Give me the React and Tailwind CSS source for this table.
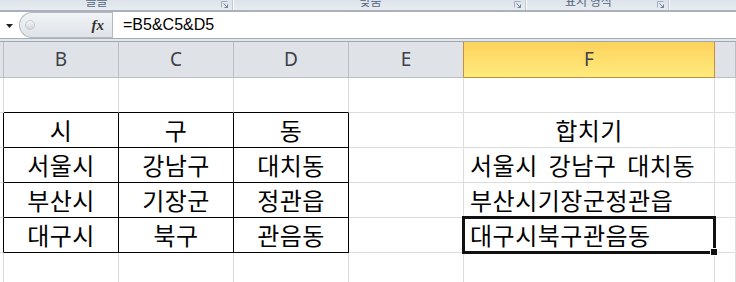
import React from 'react';

const KR = "font-['Noto_Sans_CJK_KR',sans-serif]";

function Launcher() {
  return (
    <svg width="8" height="8" viewBox="0 0 8 8" className="block">
      <path d="M0.5 6.5V0.5H6.5" fill="none" stroke="#a3afc0" />
      <path d="M2.5 2.5L6.5 6.5M3.5 6.5H6.5V3.5" fill="none" stroke="#6f819b" />
    </svg>
  );
}

function RibbonGroup({ label, className }) {
  return (
    <div className={`flex h-full shrink-0 border-r border-[#c3cad4] shadow-[1px_0_0_#f8fafc] ${className}`}>
      <div className={`flex-1 -mt-[5px] whitespace-nowrap text-center text-[12px] leading-[12px] text-[#55677f] ${KR}`}>
        {label}
      </div>
      <div className="flex w-[17px] justify-end pr-[3px] pt-[1px]">
        <Launcher />
      </div>
    </div>
  );
}

const widths = ['w-[4px]', 'w-[115px]', 'w-[115px]', 'w-[115px]', 'w-[115px]', 'w-[251px]', 'flex-1'];
const letters = ['', 'B', 'C', 'D', 'E', 'F', ''];

const rows = [
  ['', '', '', '', '', '', ''],
  ['', '시', '구', '동', '', '합치기', ''],
  ['', '서울시', '강남구', '대치동', '', '서울시 강남구 대치동', ''],
  ['', '부산시', '기장군', '정관읍', '', '부산시기장군정관읍', ''],
  ['', '대구시', '북구', '관음동', '', '대구시북구관음동', ''],
  ['', '', '', '', '', '', ''],
];

function cellClass(r, c) {
  const inTable = r >= 1 && r <= 4;
  let right = 'border-r-[#dadcdd]';
  let bottom = 'border-b-[#dadcdd]';
  if (inTable && c <= 3) right = 'border-r-black';
  if ((r === 0 || inTable) && c >= 1 && c <= 3) bottom = 'border-b-black';
  let align = 'justify-center';
  if (c === 5 && r !== 1) align = 'justify-start pl-[6px]';
  return `${widths[c]} ${right} ${bottom} ${align}`;
}

export default function App() {
  return (
    <div className="relative h-[282px] w-[736px] overflow-hidden bg-white">
      {/* ribbon group labels, scrolled mostly out of view */}
      <div className="flex h-[12px] overflow-hidden border-b-2 border-[#aab1ba] bg-gradient-to-b from-[#dde3ea] to-[#e8ecf1]">
        <RibbonGroup label="글꼴" className="-ml-[22px] w-[255px]" />
        <RibbonGroup label="맞춤" className="w-[293px]" />
        <RibbonGroup label="표시 형식" className="w-[143px]" />
      </div>

      {/* formula bar */}
      <div className="flex h-[27px] border-b border-[#a6adb6] bg-white">
        <div className="flex w-[19px] shrink-0 items-center justify-center pt-[2px]">
          <svg width="7" height="4" viewBox="0 0 7 4">
            <path d="M0 0H7L3.5 4Z" fill="#222" />
          </svg>
        </div>
        <div className="flex w-[93px] shrink-0 items-center rounded-l-full border border-r-0 border-[#b4bac3] bg-gradient-to-b from-[#f1f3f5] to-[#dfe3e8]">
          <div className="ml-[5px] h-[10px] w-[10px] rounded-full border border-[#c4c9cf] bg-gradient-to-b from-[#f4f5f7] to-[#d2d6db]" />
          <div className="ml-auto mr-[8px] font-['Liberation_Serif',serif] text-[15px] font-bold italic leading-none text-[#333]">
            fx
          </div>
        </div>
        <div className="flex flex-1 items-center border-l border-[#b4bac3] pl-[10px] font-['Liberation_Sans',sans-serif] text-[16px] text-black">
          =B5&amp;C5&amp;D5
        </div>
      </div>

      <div className="h-[2px] bg-[#e3e7ec]" />

      {/* column headers */}
      <div className="flex h-[37px] border-t border-[#9fa6b0] bg-[#dfe3e8]">
        {letters.map((l, c) => (
          <div
            key={c}
            className={`flex h-full shrink-0 items-center justify-center border-b border-r font-['Noto_Sans',sans-serif] text-[19px] text-[#3d4047] ${widths[c]} ${
              c === 5
                ? 'border-[#c4913a] bg-gradient-to-b from-[#fdd25c] to-[#ffeb7c]'
                : c === 4
                ? 'border-b-[#b9bfc7] border-r-[#c4913a]'
                : 'border-[#b9bfc7]'
            }`}
          >
            {l}
          </div>
        ))}
      </div>

      {/* cells */}
      {rows.map((row, r) => (
        <div key={r} className="flex h-[35px]">
          {row.map((v, c) => (
            <div
              key={c}
              className={`flex h-full shrink-0 items-center border-b border-r whitespace-nowrap text-[24px] leading-none tracking-[0.5px] text-black [word-spacing:5px] ${KR} ${cellClass(r, c)}`}
            >
              {v}
            </div>
          ))}
        </div>
      ))}

      {/* active cell F5 */}
      <div className="absolute left-[462px] top-[216px] h-[38px] w-[254px] border-[3px] border-[#111]" />
      <div className="absolute left-[710px] top-[248px] h-[8px] w-[8px] border border-white bg-[#111]" />
    </div>
  );
}
